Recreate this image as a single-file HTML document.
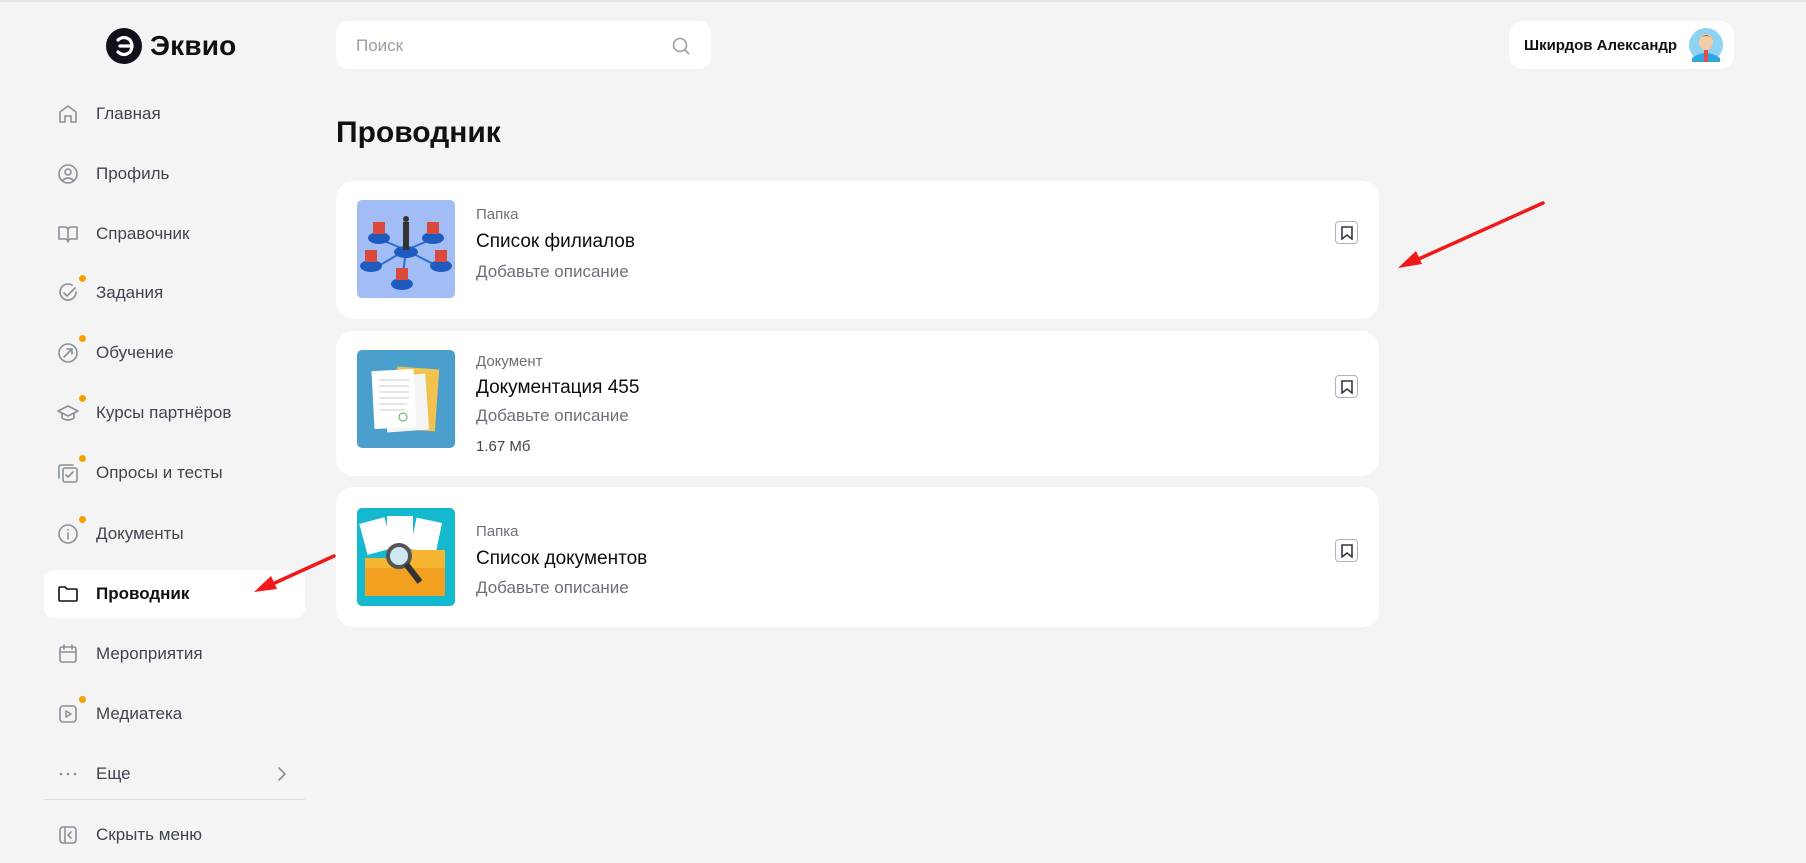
<!DOCTYPE html>
<html><head><meta charset="utf-8"><style>
*{box-sizing:border-box;margin:0;padding:0}
body{width:1806px;height:861px;background:#f4f4f5;font-family:"Liberation Sans",sans-serif;position:relative;overflow:hidden;border-top:2px solid #e4e4e4}
.abs{position:absolute}
.nav{position:absolute;left:44px;width:261px;height:48px;display:flex;align-items:center;font-size:17px;color:#3f4450;border-radius:10px}
.nav svg{position:absolute;left:12px;width:24px;height:24px;fill:none;stroke:#8a8f99;stroke-width:1.6;stroke-linecap:round;stroke-linejoin:round}
.nav span{position:absolute;left:52px}
.dot{position:absolute;left:35px;top:6px;width:7px;height:7px;border-radius:50%;background:#f5a000}
.card{position:absolute;left:336px;width:1043px;background:#fff;border-radius:18px}
.thumb{position:absolute;left:21px;width:98px;height:98px;border-radius:5px;overflow:hidden}
.lbl{position:absolute;left:140px;font-size:15px;color:#6b7079}
.ttl{position:absolute;left:140px;font-size:19px;color:#0d0d0d}
.dsc{position:absolute;left:140px;font-size:17px;color:#6b7079}
.bm{position:absolute;left:999px;width:23px;height:23px;border:1px solid #aeb2b9;border-radius:4px}
.bm svg{position:absolute;left:5px;top:4px}
</style></head><body>
<div class="abs" style="left:106px;top:26px;width:36px;height:36px;border-radius:50%;background:#0e111a"></div>
<svg class="abs" style="left:106px;top:26px" width="36" height="36" fill="none" stroke="#fff" stroke-width="3.2" stroke-linecap="round"><path d="M12 12q6-5 12 0q4 6 0 12q-6 5-12 0M14 18h10"/></svg>
<div class="abs" style="left:150px;top:28px;font-size:28px;font-weight:bold;color:#111;letter-spacing:0.2px">Эквио</div>

<div class="abs" style="left:336px;top:19px;width:375px;height:48px;background:#fff;border-radius:12px"></div>
<div class="abs" style="left:356px;top:34px;font-size:17px;color:#9a9ea6">Поиск</div>
<svg class="abs" style="left:671px;top:34px" width="20" height="20" fill="none" stroke="#9a9ea6" stroke-width="1.6"><circle cx="9" cy="9" r="6.5"/><path d="M14 14l4 4"/></svg>

<div class="abs" style="left:1509px;top:19px;width:225px;height:48px;background:#fff;border-radius:14px"></div>
<div class="abs" style="left:1524px;top:35px;font-size:15px;font-weight:bold;color:#111">Шкирдов Александр</div>
<svg class="abs" style="left:1689px;top:26px" width="34" height="34"><circle cx="17" cy="17" r="17" fill="#8fd3f2"/><path d="M3 30q14-10 28 0v4H3z" fill="#2ea6e0"/><rect x="15" y="22" width="4" height="12" fill="#e84b4b"/><ellipse cx="17" cy="14" rx="7" ry="8" fill="#f2cda8"/><path d="M10 12q7-10 14 0q-2-4-7-4t-7 4z" fill="#8b5a2b"/></svg>

<div class="abs" style="left:336px;top:114px;font-size:30px;font-weight:bold;color:#111">Проводник</div>

<div class="nav" style="top:88px"><svg viewBox="0 0 24 24"><path d="M4 20V10l8-6 8 6v10h-5v-6H9v6z"/></svg><span>Главная</span></div>
<div class="nav" style="top:148px"><svg viewBox="0 0 24 24"><circle cx="12" cy="12" r="9"/><circle cx="12" cy="10" r="3"/><path d="M6.5 18.5q5.5-5 11 0"/></svg><span>Профиль</span></div>
<div class="nav" style="top:208px"><svg viewBox="0 0 24 24"><path d="M3 5h6a3 3 0 0 1 3 3v12a3 3 0 0 0-3-3H3zM21 5h-6a3 3 0 0 0-3 3v12a3 3 0 0 1 3-3h6z"/></svg><span>Справочник</span></div>
<div class="nav" style="top:267px"><svg viewBox="0 0 24 24"><path d="M20 11a8 8 0 1 1-4-6.9"/><path d="M8 12l3 3 8-8"/></svg><div class="dot"></div><span>Задания</span></div>
<div class="nav" style="top:327px"><svg viewBox="0 0 24 24"><circle cx="12" cy="12" r="9"/><path d="M8 16l8-8M11 8h5v5"/></svg><div class="dot"></div><span>Обучение</span></div>
<div class="nav" style="top:387px"><svg viewBox="0 0 24 24"><path d="M2 10l10-5 10 5-10 5zM6 12v5q6 4 12 0v-5"/></svg><div class="dot"></div><span>Курсы партнёров</span></div>
<div class="nav" style="top:447px"><svg viewBox="0 0 24 24"><rect x="7" y="7" width="14" height="14" rx="2"/><path d="M17 4H5a2 2 0 0 0-2 2v11M10 14l2 2 5-5"/></svg><div class="dot"></div><span>Опросы и тесты</span></div>
<div class="nav" style="top:508px"><svg viewBox="0 0 24 24"><circle cx="12" cy="12" r="9"/><path d="M12 11v6M12 7.5v.5"/></svg><div class="dot"></div><span>Документы</span></div>
<div class="nav" style="top:568px;background:#fff;color:#111;font-weight:bold"><svg viewBox="0 0 24 24" style="stroke:#111"><path d="M3 6a1 1 0 0 1 1-1h5l2 2h9a1 1 0 0 1 1 1v10a1 1 0 0 1-1 1H4a1 1 0 0 1-1-1z"/></svg><span>Проводник</span></div>
<div class="nav" style="top:628px"><svg viewBox="0 0 24 24"><rect x="4" y="5" width="16" height="15" rx="2"/><path d="M4 10h16M8 3v4M16 3v4"/></svg><span>Мероприятия</span></div>
<div class="nav" style="top:688px"><svg viewBox="0 0 24 24"><rect x="4" y="4" width="16" height="16" rx="3"/><path d="M10 9v6l5-3z"/></svg><div class="dot"></div><span>Медиатека</span></div>
<div class="nav" style="top:748px"><svg viewBox="0 0 24 24" style="stroke-width:2.6"><path d="M5 12h.1M12 12h.1M19 12h.1"/></svg><span>Еще</span><svg viewBox="0 0 24 24" style="left:226px"><path d="M9 6l6 6-6 6"/></svg></div>
<div class="abs" style="left:44px;top:797px;width:261px;height:1px;background:#dcdde0"></div>
<div class="nav" style="top:809px"><svg viewBox="0 0 24 24"><rect x="4" y="4" width="16" height="16" rx="3"/><path d="M9 4v16M15 9l-3 3 3 3"/></svg><span>Скрыть меню</span></div>

<div class="card" style="top:179px;height:138px">
 <div class="thumb" style="top:19px;background:#a2bdf5"><svg width="98" height="98"><g stroke="#2d6fd0" stroke-width="2"><path d="M49 50L20 38M49 50L78 38M49 50L18 68M49 50L80 66M49 50L45 82"/></g><g fill="#1e5bbf"><ellipse cx="49" cy="52" rx="12" ry="6"/><ellipse cx="22" cy="38" rx="11" ry="6"/><ellipse cx="76" cy="38" rx="11" ry="6"/><ellipse cx="14" cy="66" rx="11" ry="6"/><ellipse cx="84" cy="66" rx="11" ry="6"/><ellipse cx="45" cy="84" rx="11" ry="6"/></g><g fill="#d94a3d"><rect x="16" y="22" width="12" height="12"/><rect x="70" y="22" width="12" height="12"/><rect x="8" y="50" width="12" height="12"/><rect x="78" y="50" width="12" height="12"/><rect x="39" y="68" width="12" height="12"/></g><rect x="46" y="22" width="6" height="28" fill="#333"/><circle cx="49" cy="19" r="3" fill="#333"/></svg></div>
 <div class="lbl" style="top:25px">Папка</div><div class="ttl" style="top:50px">Список филиалов</div><div class="dsc" style="top:81px">Добавьте описание</div>
 <div class="bm" style="top:40px"><svg width="12" height="14" fill="none" stroke="#333a45" stroke-width="1.6"><path d="M1 1h10v12l-5-4-5 4z"/></svg></div>
</div>
<div class="card" style="top:329px;height:145px">
 <div class="thumb" style="top:19px;background:#4a9fcd"><svg width="98" height="98"><rect x="38" y="18" width="42" height="62" fill="#f2c24e" transform="rotate(4 60 50)"/><rect x="28" y="25" width="42" height="56" fill="#f4f4f4" transform="rotate(-4 50 50)"/><rect x="16" y="20" width="42" height="58" fill="#fff" transform="rotate(-3 37 50)"/><g stroke="#ccc"><path d="M22 30h30M22 36h30M22 42h30M22 48h30M22 54h28M22 60h26"/></g><circle cx="46" cy="67" r="4" fill="none" stroke="#4caf50"/></svg></div>
 <div class="lbl" style="top:22px">Документ</div><div class="ttl" style="top:46px">Документация 455</div><div class="dsc" style="top:75px">Добавьте описание</div><div class="lbl" style="top:107px;color:#444">1.67 Мб</div>
 <div class="bm" style="top:44px"><svg width="12" height="14" fill="none" stroke="#333a45" stroke-width="1.6"><path d="M1 1h10v12l-5-4-5 4z"/></svg></div>
</div>
<div class="card" style="top:485px;height:140px">
 <div class="thumb" style="top:21px;background:#14b8cf"><svg width="98" height="98"><rect x="6" y="12" width="26" height="32" fill="#fff" transform="rotate(-15 19 28)"/><rect x="30" y="8" width="26" height="32" fill="#fff"/><rect x="56" y="12" width="26" height="32" fill="#fff" transform="rotate(12 69 28)"/><path d="M8 50h30l6-8h44v46H8z" fill="#f5b530"/><path d="M8 60h80v28H8z" fill="#f2a01f"/><circle cx="42" cy="48" r="11" fill="#cfe8f0" stroke="#555" stroke-width="4"/><path d="M49 56l14 18" stroke="#333" stroke-width="6"/></svg></div>
 <div class="lbl" style="top:36px">Папка</div><div class="ttl" style="top:61px">Список документов</div><div class="dsc" style="top:91px">Добавьте описание</div>
 <div class="bm" style="top:52px"><svg width="12" height="14" fill="none" stroke="#333a45" stroke-width="1.6"><path d="M1 1h10v12l-5-4-5 4z"/></svg></div>
</div>

<svg class="abs" style="left:0;top:0" width="1806" height="861"><g stroke="#f01818" stroke-width="3.5" stroke-linecap="round"><path d="M1543 201L1412 260"/><path d="M334 554L268 584"/></g><g fill="#f01818"><path d="M1398 266l18-17 6 13z"/><path d="M254 590l17-16 6 13z"/></g></svg>
</body></html>
